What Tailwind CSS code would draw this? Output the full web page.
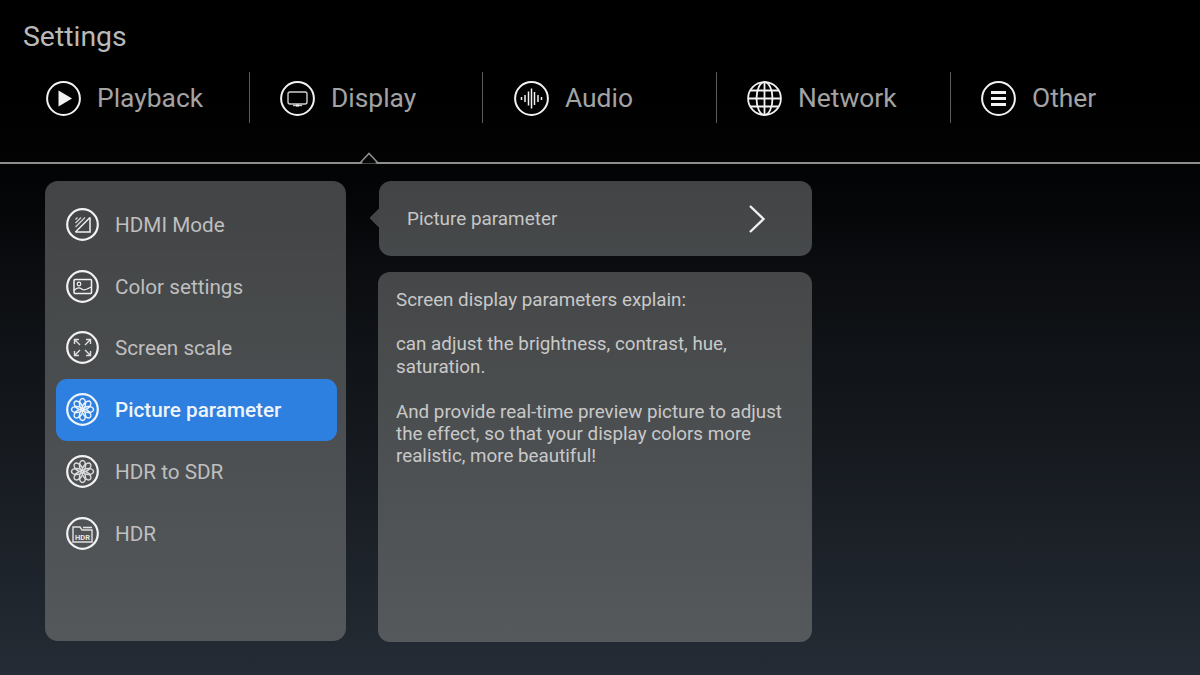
<!DOCTYPE html>
<html>
<head>
<meta charset="utf-8">
<script src="https://cdn.jsdelivr.net/npm/@tailwindcss/browser@4"></script>
</head>
<body class="bg-black">
<div class="w-[1200px] h-[675px] overflow-hidden bg-gradient-to-b from-[#000000] via-[#0b0d10] via-40% to-[#252c35] font-['Roboto',sans-serif]">
  <div class="pl-[23px] pt-[21px] text-[28.4px] leading-[32px] text-[#b9b9b9]">Settings</div>

  <div class="mt-[19px] h-[51px] pl-[15px] flex">
    <div class="w-[235px] h-full flex items-center pl-[31px] pt-[2px] gap-[16px] border-r border-[#5c5c5c] text-[#a3a3a3] text-[26.4px]">
      <svg class="w-[35px] h-[35px]" viewBox="0 0 35 35" fill="none" stroke="#f2f2f2" stroke-width="2"><circle cx="17.5" cy="17.5" r="16.4"/><path d="M12.5 9.5 L26 17.5 L12.5 25.5Z" fill="#f2f2f2" stroke="none"/></svg>
      <span>Playback</span>
    </div>
    <div class="w-[233px] h-full flex items-center pl-[30px] pt-[2px] gap-[16px] border-r border-[#5c5c5c] text-[#a3a3a3] text-[26.4px]">
      <svg class="w-[35px] h-[35px]" viewBox="0 0 35 35" fill="none" stroke="#f2f2f2" stroke-width="2"><circle cx="17.5" cy="17.5" r="16.4"/><rect x="8" y="11" width="19" height="12" rx="2" stroke-width="1.4" stroke="#cfcfcf"/><path d="M13 24.5h9" stroke-width="1.4" stroke="#cfcfcf"/><path d="M16 24.5h3" stroke-width="2" stroke="#f2f2f2"/></svg>
      <span>Display</span>
    </div>
    <div class="w-[234px] h-full flex items-center pl-[31px] pt-[2px] gap-[16px] border-r border-[#5c5c5c] text-[#a3a3a3] text-[26.4px]">
      <svg class="w-[35px] h-[35px]" viewBox="0 0 35 35" fill="none" stroke="#f2f2f2" stroke-width="2"><circle cx="17.5" cy="17.5" r="16.4"/><path d="M7.5 16v3M11 14v7M14.5 10.5v14M17.5 7.5v20M20.5 11v13M24 14v7M27.5 16v3" stroke-width="1.5"/></svg>
      <span>Audio</span>
    </div>
    <div class="w-[234px] h-full flex items-center pl-[30px] pt-[2px] gap-[16px] border-r border-[#5c5c5c] text-[#a3a3a3] text-[26.4px]">
      <svg class="w-[35px] h-[35px]" viewBox="0 0 35 35" fill="none" stroke="#f2f2f2" stroke-width="1.8"><circle cx="17.5" cy="17.5" r="16.4"/><ellipse cx="17.5" cy="17.5" rx="8" ry="16.4"/><path d="M17.5 1v33M1 17.5h33M3.5 9.5h28M3.5 25.5h28"/></svg>
      <span>Network</span>
    </div>
    <div class="h-full flex items-center pl-[30px] pt-[2px] gap-[16px] text-[#a3a3a3] text-[26.4px]">
      <svg class="w-[35px] h-[35px]" viewBox="0 0 35 35" fill="none" stroke="#f2f2f2" stroke-width="2"><circle cx="17.5" cy="17.5" r="16.4"/><path d="M10 11.5h15M10 17.5h15M10 23.5h15" stroke-width="2.8"/></svg>
      <span>Other</span>
    </div>
  </div>

  <div class="relative mt-[39px] h-[2px] bg-[#8d8d8d]">
    <svg class="absolute left-[358px] top-[-10px] w-[22px] h-[12px]" viewBox="0 0 22 12" fill="none"><path d="M1 11 H2 L11 1.5 L20 11 H21" stroke="#8d8d8d" stroke-width="1.6"/><path d="M3.5 11.5 L11 3.5 L18.5 11.5Z" fill="#050607"/></svg>
  </div>

  <div class="mt-[17px] pl-[45px] flex">
    <div class="w-[301px] h-[460px] rounded-[13px] bg-gradient-to-b from-[#424445] to-[#54585b] pt-[13px] pl-[11px] pr-[9px] text-[20.7px]">
      <div class="h-[61.7px] flex items-center pl-[10px] gap-[16px] text-[#bfbfbf] border-b border-white/[0.015]">
        <svg class="w-[33px] h-[33px]" viewBox="0 0 33 33" fill="none" stroke="#f2f2f2" stroke-width="2.2"><circle cx="16.5" cy="16.5" r="15.3"/><path d="M24 9.5V24H9.5" stroke-width="1.5"/><path d="M24 9.5 9.5 24" stroke-width="1.4"/><path d="M9.5 15 15 9.5M9.5 19 19 9.5M9.5 11.5 11.5 9.5" stroke-width="1.3" stroke="#cfcfcf"/></svg>
        <span class="pt-[2px]">HDMI Mode</span>
      </div>
      <div class="h-[61.7px] flex items-center pl-[10px] gap-[16px] text-[#bfbfbf] border-b border-white/[0.015]">
        <svg class="w-[33px] h-[33px]" viewBox="0 0 33 33" fill="none" stroke="#f2f2f2" stroke-width="2.2"><circle cx="16.5" cy="16.5" r="15.3"/><rect x="8" y="9.5" width="17.5" height="14" rx="1" stroke-width="1.5"/><circle cx="13" cy="14" r="1.8" stroke-width="1.2"/><path d="M8 20.5c4-4 6-2.5 8.5-1s5-1 9-2.5" stroke-width="1.3"/></svg>
        <span class="pt-[2px]">Color settings</span>
      </div>
      <div class="h-[61.7px] flex items-center pl-[10px] gap-[16px] text-[#bfbfbf] border-b border-white/[0.015]">
        <svg class="w-[33px] h-[33px]" viewBox="0 0 33 33" fill="none" stroke="#f2f2f2" stroke-width="2.2"><circle cx="16.5" cy="16.5" r="15.3"/><g stroke="#dedede" stroke-width="1.4"><path d="M8.5 8.5 14 14M8.5 13V8.5H13"/><path d="M24.5 8.5 19 14M20 8.5h4.5V13"/><path d="M8.5 24.5 14 19M8.5 20v4.5H13"/><path d="M24.5 24.5 19 19M24.5 20v4.5H20"/></g></svg>
        <span class="pt-[2px]">Screen scale</span>
      </div>
      <div class="h-[61.7px] flex items-center pl-[10px] gap-[16px] text-[#f0f4fa] bg-[#2d7fe0] rounded-[11px]">
        <svg class="w-[33px] h-[33px]" viewBox="0 0 33 33" fill="none" stroke="#eef4fb" stroke-width="2.2"><circle cx="16.5" cy="16.5" r="15.3"/><g stroke-width="1.5"><ellipse cx="16.5" cy="10.5" rx="3" ry="5"/><ellipse cx="16.5" cy="22.5" rx="3" ry="5"/><ellipse cx="10.5" cy="16.5" rx="5" ry="3"/><ellipse cx="22.5" cy="16.5" rx="5" ry="3"/><ellipse cx="16.5" cy="10.5" rx="3" ry="5" transform="rotate(45 16.5 16.5)"/><ellipse cx="16.5" cy="10.5" rx="3" ry="5" transform="rotate(135 16.5 16.5)"/><ellipse cx="16.5" cy="10.5" rx="3" ry="5" transform="rotate(225 16.5 16.5)"/><ellipse cx="16.5" cy="10.5" rx="3" ry="5" transform="rotate(315 16.5 16.5)"/></g></svg>
        <span class="pt-[2px] font-medium">Picture parameter</span>
      </div>
      <div class="h-[61.7px] flex items-center pl-[10px] gap-[16px] text-[#bfbfbf] border-b border-white/[0.015]">
        <svg class="w-[33px] h-[33px]" viewBox="0 0 33 33" fill="none" stroke="#f2f2f2" stroke-width="2.2"><circle cx="16.5" cy="16.5" r="15.3"/><g stroke-width="1.5" stroke="#dcdcdc"><ellipse cx="16.5" cy="10.5" rx="3" ry="5"/><ellipse cx="16.5" cy="22.5" rx="3" ry="5"/><ellipse cx="10.5" cy="16.5" rx="5" ry="3"/><ellipse cx="22.5" cy="16.5" rx="5" ry="3"/><ellipse cx="16.5" cy="10.5" rx="3" ry="5" transform="rotate(45 16.5 16.5)"/><ellipse cx="16.5" cy="10.5" rx="3" ry="5" transform="rotate(135 16.5 16.5)"/><ellipse cx="16.5" cy="10.5" rx="3" ry="5" transform="rotate(225 16.5 16.5)"/><ellipse cx="16.5" cy="10.5" rx="3" ry="5" transform="rotate(315 16.5 16.5)"/></g></svg>
        <span class="pt-[2px]">HDR to SDR</span>
      </div>
      <div class="h-[61.7px] flex items-center pl-[10px] gap-[16px] text-[#bfbfbf]">
        <svg class="w-[33px] h-[33px]" viewBox="0 0 33 33" fill="none" stroke="#f2f2f2" stroke-width="2.2"><circle cx="16.5" cy="16.5" r="15.3"/><path d="M7 25V10h7l2 3h10v12Z" stroke-width="1.4" stroke="#e0e0e0"/><path d="M17 10.5h9" stroke-width="1.6" stroke="#e0e0e0"/><text x="16.5" y="22.5" text-anchor="middle" font-family="Roboto" font-weight="700" font-size="7.5" fill="#e6e6e6" stroke="none">HDR</text></svg>
        <span class="pt-[2px]">HDR</span>
      </div>
    </div>

    <div class="ml-[32px] w-[434px]">
      <div class="relative ml-[1px] h-[75px] rounded-[12px] bg-gradient-to-b from-[#424344] to-[#46494b] pl-[28px] pr-[46px] flex items-center justify-between text-[18.9px] text-[#c6c6c6]">
        <div class="absolute left-[-7px] top-[30px] w-[14px] h-[14px] rotate-45 bg-[#434445] rounded-[2px] [clip-path:polygon(0_0,0_100%,100%_100%)]"></div>
        <span class="relative pt-[2px]">Picture parameter</span>
        <svg class="w-[18px] h-[30px]" viewBox="0 0 18 30" fill="none" stroke="#f0f0f0" stroke-width="2.4"><path d="M2 2 15.5 15 2 28"/></svg>
      </div>
      <div class="mt-[16px] h-[370px] rounded-[12px] bg-gradient-to-b from-[#454748] to-[#55595c] pl-[18px] pr-[20px] pt-[17px] text-[18.8px] leading-[22.4px] text-[#c9c9c9]">
        <p>Screen display parameters explain:</p>
        <p class="mt-[22px]">can adjust the brightness, contrast, hue,<br>saturation.</p>
        <p class="mt-[22.4px]">And provide real-time preview picture to adjust<br>the effect, so that your display colors more<br>realistic, more beautiful!</p>
      </div>
    </div>
  </div>
</div>
</body>
</html>
